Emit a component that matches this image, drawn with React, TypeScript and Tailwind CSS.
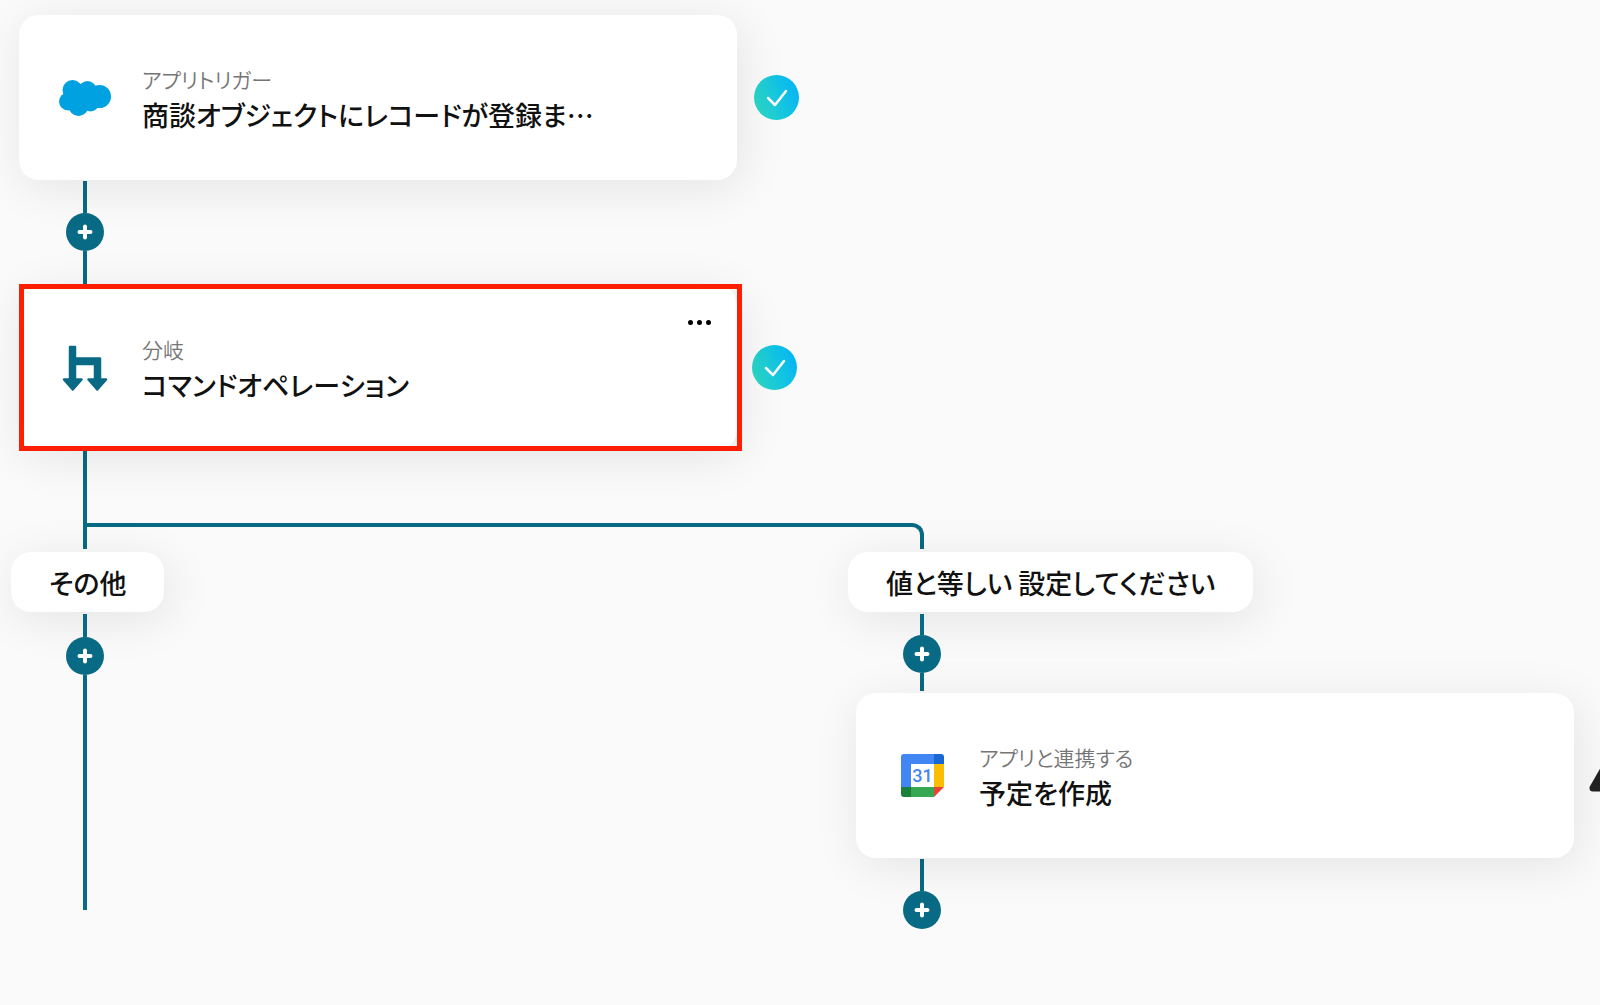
import React from "react";

function SalesforceIcon() {
  return (
    <svg className="w-[54px] h-[38px]" viewBox="0 0 54 38" fill="#00a1e0">
      <circle cx="14.500" cy="11" r="10" />
      <circle cx="29.500" cy="11" r="9" />
      <circle cx="41.500" cy="17.500" r="11.500" />
      <circle cx="10" cy="22.500" r="9" />
      <circle cx="20.500" cy="27" r="10" />
      <circle cx="32.500" cy="24" r="8.500" />
      <path d="M14 4l8 1 6-1 9 3 4 21-8 3-20-1-4-8z" />
    </svg>
  );
}

function BranchIcon() {
  return (
    <svg
      className="w-[46px] h-[48px]"
      viewBox="0 0 46 48"
      fill="#086a84"
      stroke="#086a84"
      strokeWidth="2.500"
      strokeLinejoin="round"
    >
      <path d="M8 3h5v11.500h25v21h-5V20H13v15.500H8z" />
      <path d="M2 35.500h17.500l-8.750 10z" />
      <path d="M26.500 35.500H44l-8.750 10z" />
    </svg>
  );
}

function CalendarIcon() {
  return (
    <svg className="w-[43px] h-[43px]" viewBox="0 0 43 43">
      <path d="M3 0h30v10H10v23H0V3a3 3 0 0 1 3-3z" fill="#4285f4" />
      <path d="M33 0h7a3 3 0 0 1 3 3v7H33z" fill="#1967d2" />
      <path d="M33 10h10v23H33z" fill="#fbbc04" />
      <path d="M0 33h10v10H3a3 3 0 0 1-3-3z" fill="#188038" />
      <path d="M10 33h23v10H10z" fill="#34a853" />
      <path d="M33 33h10L33 43z" fill="#ea4335" />
      <path d="M10 10h23v23H10z" fill="#fff" />
      <text
        x="21.500"
        y="28"
        textAnchor="middle"
        fontSize="18"
        fontWeight="500"
        fontFamily="Roboto, sans-serif"
        fill="#4285f4"
      >
        31
      </text>
    </svg>
  );
}

function CheckBadge() {
  return (
    <div className="shrink-0 w-[45px] h-[45px] rounded-full bg-linear-70 from-[#30dcbc] to-[#06b0fa] flex justify-center items-center">
      <svg
        className="w-[22px] h-[18px]"
        viewBox="0 0 22 18"
        fill="none"
        stroke="#fff"
        strokeWidth="2.500"
        strokeLinecap="round"
        strokeLinejoin="round"
      >
        <path d="M2 9l7 7L20 2" />
      </svg>
    </div>
  );
}

function WarningIcon() {
  return (
    <svg
      className="shrink-0 w-[48px] h-[43px] overflow-visible"
      viewBox="0 0 48 43"
    >
      <path
        d="M24-1L44 34H4z"
        fill="#222"
        stroke="#222"
        strokeWidth="7"
        strokeLinejoin="round"
      />
      <path d="M24 9v12M24 28v1" stroke="#fff" strokeWidth="4" />
    </svg>
  );
}

function Line({ className }: { className: string }) {
  return <div className={`w-1 bg-[#086a84] ${className}`}></div>;
}

function AddButton() {
  return (
    <button
      aria-label="追加"
      className="w-[38px] h-[38px] rounded-full bg-[#086a84] flex justify-center items-center"
    >
      <svg
        className="w-4 h-4"
        viewBox="0 0 16 16"
        stroke="#fff"
        strokeWidth="4"
        strokeLinecap="round"
      >
        <path d="M8 2.500v11M2.500 8h11" />
      </svg>
    </button>
  );
}

type CardProps = {
  icon: React.ReactNode;
  label: string;
  title: string;
  selected?: boolean;
};

function Card({ icon, label, title, selected }: CardProps) {
  return (
    <div className="relative shrink-0 w-[718px] py-[45px] pl-[38px] rounded-[20px] bg-white shadow-[4px_8px_48px_rgba(0,0,0,0.09)] flex items-center">
      <div className="w-14 flex justify-center">{icon}</div>
      <div className="pt-[3px] pl-[29px]">
        <p className="text-[21px] leading-8 font-[350] text-[#757575]">
          {label}
        </p>
        <h2 className="text-[27px] leading-10 font-medium">{title}</h2>
      </div>
      {selected && (
        <>
          <button
            aria-label="メニュー"
            className="absolute top-[29px] right-[22px] w-8 h-4 flex justify-center items-center gap-1"
          >
            <span className="w-[5px] h-[5px] rounded-full bg-black"></span>
            <span className="w-[5px] h-[5px] rounded-full bg-black"></span>
            <span className="w-[5px] h-[5px] rounded-full bg-black"></span>
          </button>
          <div className="absolute -top-px -bottom-px left-0 -right-[5px] border-[5px] border-[#ff1f00] pointer-events-none"></div>
        </>
      )}
    </div>
  );
}

function Pill({ text }: { text: string }) {
  return (
    <div className="w-fit px-[38px] pt-[11px] pb-[9px] rounded-[20px] bg-white text-[27px] leading-10 font-medium shadow-[4px_8px_48px_rgba(0,0,0,0.09)]">
      {text}
    </div>
  );
}

export default function App() {
  return (
    <main
      lang="ja"
      className="min-h-screen overflow-hidden bg-[#fafafa] pt-[15px] text-[#111] font-['Noto_Sans_CJK_JP',sans-serif] [font-feature-settings:'palt'] [font-kerning:none]"
    >
      <div className="pl-[19px] flex items-center gap-[17px]">
        <Card
          icon={<SalesforceIcon />}
          label="アプリトリガー"
          title="商談オブジェクトにレコードが登録ま…"
        />
        <CheckBadge />
      </div>

      <div className="ml-[66px] w-[38px] pt-px flex flex-col items-center">
        <Line className="h-8" />
        <AddButton />
        <Line className="h-[33px]" />
      </div>

      <div className="pl-[19px] pt-px flex items-center gap-[15px]">
        <Card
          icon={<BranchIcon />}
          label="分岐"
          title="コマンドオペレーション"
          selected
        />
        <CheckBadge />
      </div>

      <div className="ml-[83px] pt-px flex items-end">
        <Line className="h-[98px]" />
        <div className="w-[837px] h-[26px] border-t-4 border-r-4 border-[#086a84] rounded-tr-xl"></div>
      </div>

      <div className="pt-[3px] flex items-start">
        <section className="shrink-0 w-[848px] pl-[11px]">
          <Pill text="その他" />
          <div className="ml-[55px] w-[38px] pt-[2px] flex flex-col items-center">
            <Line className="h-[23px]" />
            <AddButton />
            <Line className="h-[235px]" />
          </div>
        </section>
        <section className="shrink-0">
          <Pill text="値と等しい 設定してください" />
          <div className="ml-[55px] w-[38px] pt-[2px] flex flex-col items-center">
            <Line className="h-[21px]" />
            <AddButton />
            <Line className="h-[18px]" />
          </div>
          <div className="ml-2 pt-[2px] flex items-center gap-[15px]">
            <Card
              icon={<CalendarIcon />}
              label="アプリと連携する"
              title="予定を作成"
            />
            <WarningIcon />
          </div>
          <div className="ml-[55px] w-[38px] pt-px flex flex-col items-center">
            <Line className="h-8" />
            <AddButton />
          </div>
        </section>
      </div>
    </main>
  );
}
